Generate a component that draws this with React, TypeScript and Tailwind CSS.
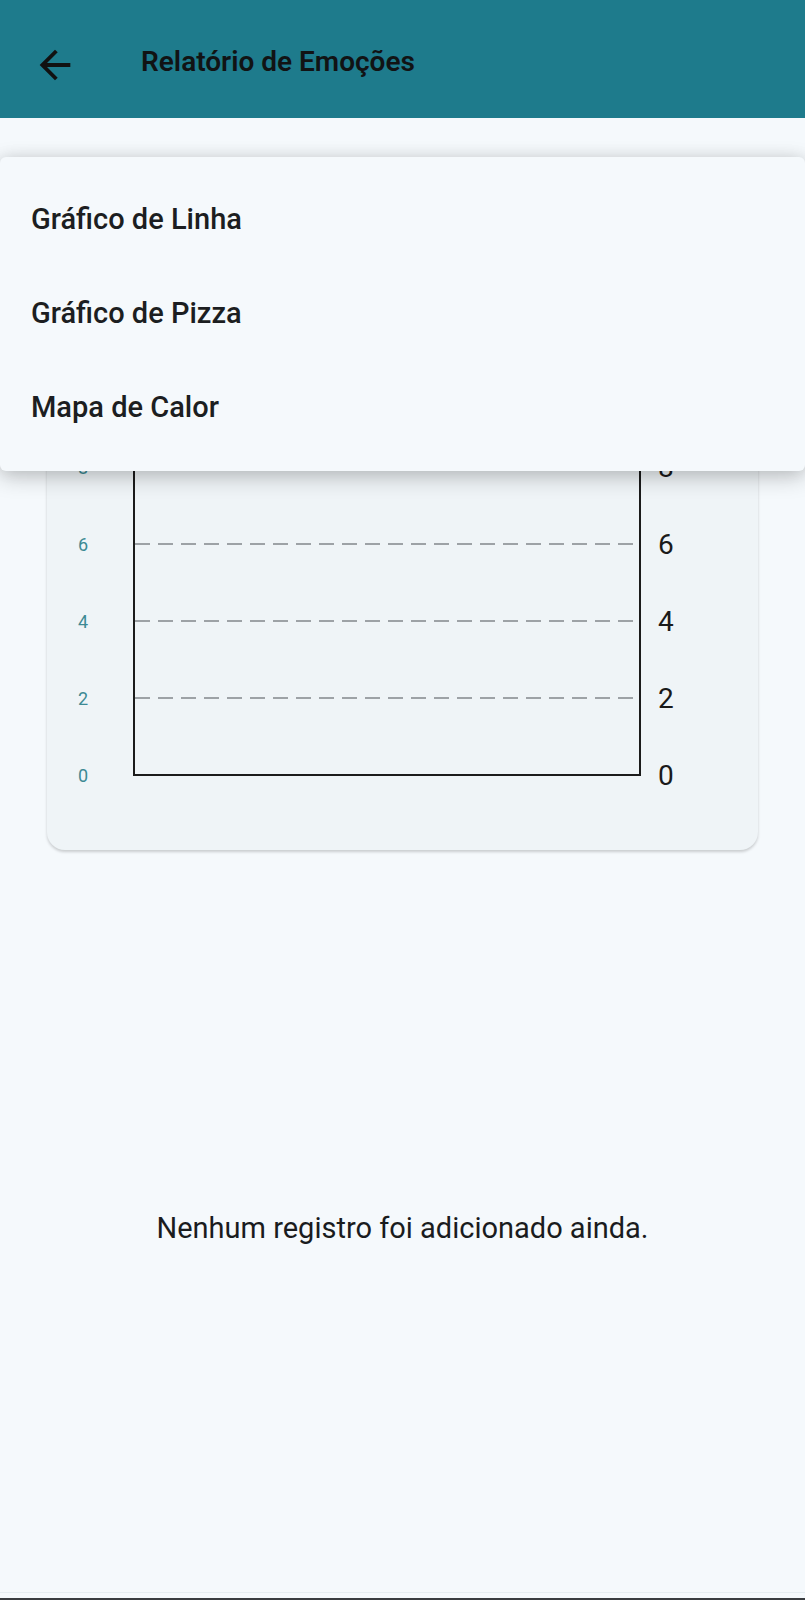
import React from "react";

const OFF = 32;
const labels = [
  { v: "8", y: 329 - OFF },
  { v: "6", y: 406 - OFF },
  { v: "4", y: 483 - OFF },
  { v: "2", y: 560 - OFF },
  { v: "0", y: 637 - OFF },
];

function Chart() {
  return (
    <svg width="711" height="680" viewBox="0 0 711 680" className="block">
      {labels.slice(1, 4).map((l) => (
        <line
          key={"g" + l.v}
          x1={88}
          x2={592}
          y1={l.y}
          y2={l.y}
          stroke="#9da2a6"
          strokeWidth={1.8}
          strokeDasharray="15 8"
        />
      ))}
      <line x1={87} x2={87} y1={0} y2={606} stroke="#1b1b1b" strokeWidth={2} />
      <line x1={593} x2={593} y1={0} y2={606} stroke="#1b1b1b" strokeWidth={2} />
      <line x1={86} x2={594} y1={605} y2={605} stroke="#1b1b1b" strokeWidth={2.2} />
      {labels.map((l) => (
        <text
          key={"l" + l.v}
          x={36}
          y={l.y}
          textAnchor="middle"
          dominantBaseline="central"
          fontFamily="Roboto, 'Noto Sans', sans-serif"
          fontSize={18}
          fill="#3d8a94"
        >
          {l.v}
        </text>
      ))}
      {labels.map((l) => (
        <text
          key={"r" + l.v}
          x={611}
          y={l.y}
          dominantBaseline="central"
          fontFamily="Roboto, 'Noto Sans', sans-serif"
          fontSize={28}
          fill="#1a1a1a"
        >
          {l.v}
        </text>
      ))}
    </svg>
  );
}

export default function App() {
  return (
    <div
      className="relative flex h-[1600px] w-[805px] flex-col overflow-hidden bg-[#f5f9fc]"
      style={{ fontFamily: "Roboto, 'Noto Sans', sans-serif" }}
    >
      <header className="flex h-[118px] shrink-0 items-center bg-[#1e7b8c] pt-[6px]">
        <div className="ml-[32px] mt-[6px] flex h-[46px] w-[46px] items-center justify-center">
          <svg width="46" height="46" viewBox="0 0 24 24" fill="#111">
            <path d="M20 11H7.83l5.59-5.59L12 4l-8 8 8 8 1.41-1.41L7.83 13H20v-2z" />
          </svg>
        </div>
        <h1 className="ml-[63px] text-[28px] font-semibold leading-none text-[#111314]">
          Relatório de Emoções
        </h1>
      </header>

      <main className="shrink-0 px-[47px] pt-[52px]">
        <div className="h-[680px] overflow-hidden rounded-[18px] bg-[#eff4f7] shadow-[0_2px_3px_rgba(0,0,0,0.18)]">
          <Chart />
        </div>
      </main>

      <p className="mt-[357px] text-center text-[29px] text-[#1a1c1e]">
        Nenhum registro foi adicionado ainda.
      </p>

      <div className="flex-1" />
      <div className="h-[1px] bg-[#e6edf1]" />
      <div className="h-[5px]" />
      <div className="h-[2px] bg-[#3a3d40]" />

      <div className="absolute left-0 right-0 top-[157px] rounded-[6px] bg-[#f5f9fc] py-[16px] shadow-[0_6px_22px_rgba(0,0,0,0.22),0_0_16px_rgba(0,0,0,0.08)]">
        {["Gráfico de Linha", "Gráfico de Pizza", "Mapa de Calor"].map((t) => (
          <div
            key={t}
            className="flex h-[94px] items-center pl-[31px] text-[29px] font-medium text-[#1c1e21]"
          >
            {t}
          </div>
        ))}
      </div>
    </div>
  );
}
